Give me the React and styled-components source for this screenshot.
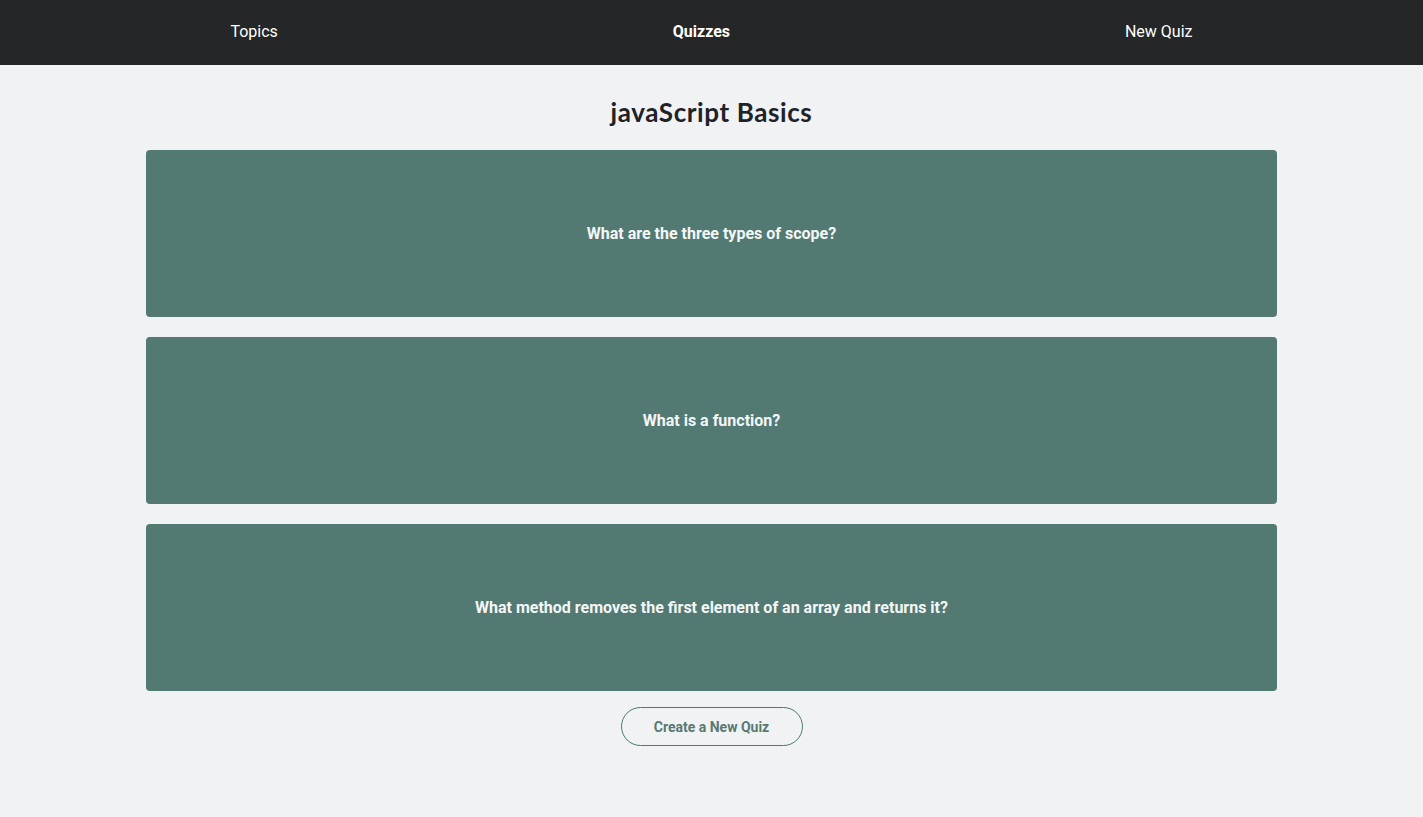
import React from "react";
import styled, { createGlobalStyle } from "styled-components";

const Global = createGlobalStyle`
  html, body { margin: 0; padding: 0; }
  body {
    background: #f0f2f4;
    font-family: Roboto, "Liberation Sans", sans-serif;
    color: #202226;
  }
`;

const Header = styled.header`
  height: 65px;
  background: #242628;
`;

const Nav = styled.nav`
  height: 100%;
  box-sizing: border-box;
  display: flex;
  align-items: center;
  justify-content: space-around;
  padding: 0 33px 2px;
`;

const NavLink = styled.a`
  color: #ffffff;
  font-size: 16px;
  font-weight: ${(p) => (p.$active ? 700 : 400)};
  text-decoration: none;
  cursor: pointer;
`;

const Main = styled.main`
  width: 1131px;
  margin: 0 auto;
  padding: 32px 0 40px;
  display: flex;
  flex-direction: column;
`;

const Title = styled.h1`
  margin: 0 0 22px;
  text-align: center;
  font-family: Lato, "Noto Sans", sans-serif;
  font-size: 26px;
  line-height: 31px;
  font-weight: 700;
  letter-spacing: 0.6px;
  color: #202226;
`;

const CardList = styled.ul`
  list-style: none;
  margin: 0;
  padding: 0;
  display: flex;
  flex-direction: column;
  gap: 20px;
`;

const Card = styled.li`
  height: 167px;
  border-radius: 4px;
  background: #527a72;
  display: flex;
  align-items: center;
  justify-content: center;
  color: #f4f6f6;
  font-size: 16px;
  font-weight: 700;
  cursor: pointer;
`;

const ButtonRow = styled.div`
  display: flex;
  justify-content: center;
  margin-top: 16px;
`;

const Button = styled.button`
  width: 182px;
  height: 39px;
  border: 1px solid #4d7a70;
  border-radius: 20px;
  background: transparent;
  color: #587872;
  font-family: Roboto, "Liberation Sans", sans-serif;
  font-size: 14px;
  font-weight: 700;
  cursor: pointer;
`;

const questions = [
  "What are the three types of scope?",
  "What is a function?",
  "What method removes the first element of an array and returns it?",
];

export default function App() {
  return (
    <>
      <Global />
      <Header>
        <Nav>
          <NavLink>Topics</NavLink>
          <NavLink $active>Quizzes</NavLink>
          <NavLink>New Quiz</NavLink>
        </Nav>
      </Header>
      <Main>
        <Title>javaScript Basics</Title>
        <CardList>
          {questions.map((q) => (
            <Card key={q}>{q}</Card>
          ))}
        </CardList>
        <ButtonRow>
          <Button>Create a New Quiz</Button>
        </ButtonRow>
      </Main>
    </>
  );
}
